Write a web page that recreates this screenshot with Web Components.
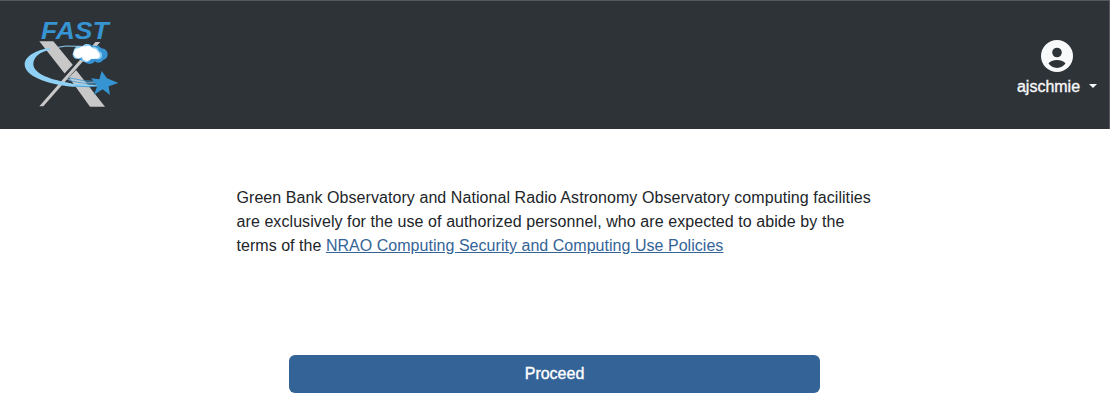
<!DOCTYPE html>
<html lang="en">
<head>
<meta charset="utf-8">
<title>FastX</title>
<style>
body{margin:0;background:#fff;color:#212529;font:16px/24px "Liberation Sans",Arial,sans-serif}
</style>
</head>
<body>
<fastx-page></fastx-page>
<script>
const define = (name, html) => customElements.define(name, class extends HTMLElement {
  constructor() {
    super();
    this.attachShadow({mode: 'open'}).innerHTML = html;
  }
});

define('fastx-logo', `
<style>:host{display:block;width:110px;height:100px}svg{display:block}</style>
<svg width="110" height="100" viewBox="0 0 330 300" role="img" aria-label="FastX">
  <path fill="none" stroke="#8fd0f5" stroke-width="3" d="M100 104Q150 92 198 97"/>
  <path fill="#c8c8c8" d="M70 82H112L175 158L150 184Z"/>
  <path fill="#c8c8c8" d="M158 189L180 168L267 278H222Z"/>
  <path fill="#2e3338" d="M139 185L172 151L180 168L158 191Z"/>
  <path fill="#c8c8c8" d="M239 84H252L82 277H70Z"/>
  <path fill="#8fd0f5" d="M101 102C62 107 27 127 26 150C25 185 90 211 170 218L250 217V213L170 209C105 198 53 180 52 151C51 128 75 112 103 107Z"/>
  <path fill="none" stroke="#3c98d4" stroke-width="2.5" d="M158 191Q205 204 255 203M158 199Q210 212 255 209M178 216Q220 222 260 214"/>
  <path fill="none" stroke="#9ed4f3" stroke-width="2" d="M153 195Q205 209 255 206"/>
  <path fill="#3794d2" d="M257 171L273 193L307 207L278 217L282 243L260 226L234 242L244 216L225 193L250 196Z"/>
  <g fill="#3794d2"><circle cx="216" cy="108" r="18"/><circle cx="238" cy="113" r="20"/><circle cx="257" cy="121" r="18"/><circle cx="247" cy="129" r="17"/><circle cx="221" cy="132" r="18"/><circle cx="200" cy="126" r="14"/></g>
  <g fill="#91cff3"><circle cx="188" cy="112" r="15"/><circle cx="184" cy="121" r="14"/><circle cx="212" cy="105" r="15"/><circle cx="232" cy="116" r="18"/><circle cx="246" cy="124" r="12"/><circle cx="210" cy="131" r="14"/></g>
  <g fill="#fff"><circle cx="188" cy="118" r="15"/><circle cx="202" cy="112" r="15"/><circle cx="216" cy="109" r="14"/><circle cx="231" cy="119" r="16"/><circle cx="213" cy="126" r="15"/><circle cx="241" cy="124" r="10"/></g>
  <path fill="#c8c8c8" d="M239 84H252L242 95H230Z"/>
  <text x="75" y="76" fill="#3794d2" font-family="Liberation Sans" font-size="69" font-weight="700" font-style="italic" textLength="203" lengthAdjust="spacingAndGlyphs">FAST</text>
</svg>`);

define('user-menu', `
<style>
:host{display:flex;flex-direction:column;align-items:center;color:#f8f9fa;width:80px}
svg{display:block}
.name{display:flex;align-items:center;height:24px;margin-top:3px;white-space:nowrap;-webkit-text-stroke:.35px #f8f9fa}
.caret{margin-left:9px;margin-top:-3px;border:4px solid transparent;border-top-color:#f8f9fa;border-bottom:0}
</style>
<svg width="32" height="32" viewBox="0 0 32 32"><circle cx="16" cy="16" r="16" fill="#f8f9fa"/><circle cx="16" cy="12.5" r="4.8" fill="#2e3338"/><path fill="#2e3338" d="M7.5 23.6C9 21.3 12 20 16 20s7 1.3 8.5 3.6C22.5 26.3 19.5 28 16 28s-6.500-1.700-8.500-4.400Z"/></svg>
<div class="name"><slot></slot><span class="caret"></span></div>`);

define('top-bar', `
<style>:host{display:flex;justify-content:space-between;box-sizing:border-box;height:129px;padding:13px 12px 0 16px;background:#2e3338;border-top:1px solid #55595d;border-right:1px solid #55595d}
user-menu{margin-top:26px}</style>
<fastx-logo></fastx-logo><user-menu>ajschmie</user-menu>`);

define('policy-notice', `
<style>:host{display:block;margin:57px 0 0 236.500px;white-space:nowrap}
div{height:24px}.a{letter-spacing:.066px}.b{letter-spacing:.078px}.c{letter-spacing:.035px}a{color:#346497;text-decoration:underline}</style>
<div class="a">Green Bank Observatory and National Radio Astronomy Observatory computing facilities</div>
<div class="b">are exclusively for the use of authorized personnel, who are expected to abide by the</div>
<div class="c">terms of the <a href="#">NRAO Computing Security and Computing Use Policies</a></div>`);

define('primary-button', `
<style>:host{display:block;width:531px;margin:97px 0 0 289px}
button{display:block;width:100%;height:38px;padding:0;border:0;border-radius:6px;background:#346497;color:#fff;font:inherit;-webkit-text-stroke:.35px #fff}</style>
<button><slot></slot></button>`);

define('fastx-page', `
<style>:host{display:block;height:410px;overflow:hidden}</style>
<top-bar></top-bar>
<policy-notice></policy-notice>
<primary-button>Proceed</primary-button>`);
</script>
</body>
</html>
